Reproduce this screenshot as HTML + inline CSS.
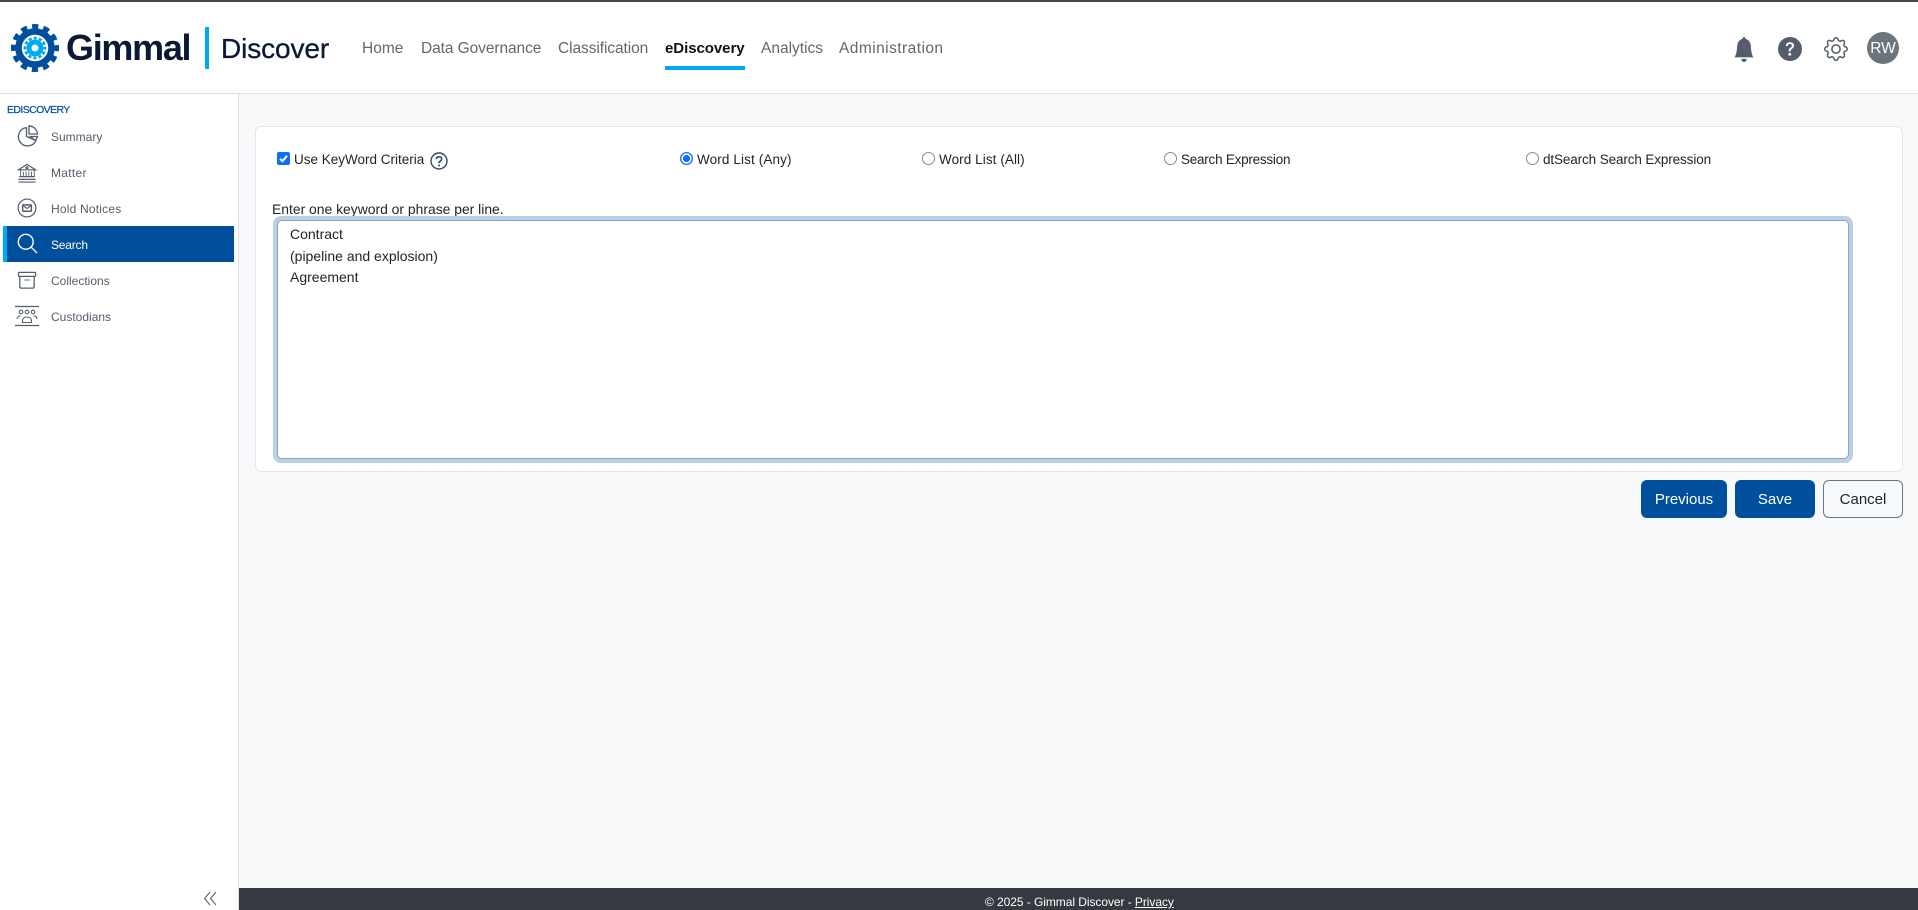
<!DOCTYPE html>
<html lang="en">
<head>
<meta charset="utf-8">
<title>Gimmal Discover</title>
<style>
html,body{margin:0;padding:0}
body{width:1918px;height:910px;overflow:hidden;position:relative;background:#f8f9fa;font-family:"Liberation Sans",sans-serif;color:#212529}
.a{position:absolute;white-space:nowrap}
svg{position:absolute;overflow:visible}
.nav{top:39px;line-height:20px;font-size:15.5px;color:#5f6873}
.side{left:51px;font-size:12px;line-height:16px;color:#555d6b}
.lbl{font-size:13.5px;line-height:18px;color:#212529}
.btn{top:480px;height:38px;line-height:40px;border-radius:6px;text-align:center;font-size:15px;box-sizing:border-box}
.radio{width:11px;height:11px;border:1px solid #8a8a8a;border-radius:50%;background:#fff;top:152px}
</style>
</head>
<body>
<div class="a" style="left:0;top:0;width:1918px;height:2px;background:#4a4453"></div>
<div class="a" style="left:0;top:2px;width:1918px;height:91px;background:#fff"></div>
<div class="a" style="left:0;top:93px;width:1918px;height:1px;background:#dee2e6"></div>

<svg style="left:0;top:0" width="70" height="90" viewBox="0 0 70 90">
  <circle cx="35" cy="48" r="21.5" fill="none" stroke="#004f9c" stroke-width="5" stroke-dasharray="6.2 5.06" stroke-dashoffset="3.1"/>
  <circle cx="35" cy="48" r="16.5" fill="none" stroke="#004f9c" stroke-width="6.5"/>
  <circle cx="35" cy="48" r="10" fill="none" stroke="#00a9f4" stroke-width="2.6" stroke-dasharray="3.2 2.03" stroke-dashoffset="1.6"/>
  <circle cx="35" cy="48" r="6" fill="none" stroke="#00a9f4" stroke-width="5"/>
</svg>
<div class="a" style="left:66px;top:26px;font-size:36px;line-height:44px;font-weight:700;letter-spacing:-1.3px;color:#0b1a33">Gimmal</div>
<div class="a" style="left:205px;top:27px;width:4px;height:42px;background:#00a9f4"></div>
<div class="a" style="left:221px;top:31px;font-size:28px;line-height:36px;letter-spacing:-.1px;-webkit-text-stroke:.3px #0b1a33;color:#0b1a33">Discover</div>

<div class="a nav" style="left:362px">Home</div>
<div class="a nav" style="left:421px;letter-spacing:-.08px">Data Governance</div>
<div class="a nav" style="left:558px;letter-spacing:-.08px">Classification</div>
<div class="a nav" style="left:665px;color:#111;font-weight:700;font-size:15px;letter-spacing:-.05px">eDiscovery</div>
<div class="a" style="left:665px;top:66px;width:80px;height:4px;background:#00a9f4"></div>
<div class="a nav" style="left:761px">Analytics</div>
<div class="a nav" style="left:839px;letter-spacing:.45px">Administration</div>

<svg style="left:1733px;top:37px" width="22" height="25" viewBox="0 0 16 16" preserveAspectRatio="none" fill="#555d6b"><path d="M8 16a2 2 0 0 0 2-2H6a2 2 0 0 0 2 2zm.995-14.901a1 1 0 1 0-1.99 0A5.002 5.002 0 0 0 3 6c0 1.098-.5 6-2 7h14c-1.5-1-2-5.902-2-7 0-2.42-1.72-4.44-4.005-4.901z"/></svg>
<svg style="left:1778px;top:37px" width="24" height="24" viewBox="0 0 16 16" fill="#555d6b"><path d="M16 8A8 8 0 1 1 0 8a8 8 0 0 1 16 0zM5.496 6.033h.825c.138 0 .248-.113.266-.25.09-.656.54-1.134 1.342-1.134.686 0 1.314.343 1.314 1.168 0 .635-.374.927-.965 1.371-.673.489-1.206 1.06-1.168 1.987l.003.217a.25.25 0 0 0 .25.246h.811a.25.25 0 0 0 .25-.25v-.105c0-.718.273-.927 1.01-1.486.609-.463 1.244-.977 1.244-2.056 0-1.511-1.276-2.241-2.673-2.241-1.267 0-2.655.59-2.75 2.286a.237.237 0 0 0 .241.247zm2.325 6.443c.61 0 1.029-.394 1.029-.927 0-.552-.42-.94-1.029-.94-.584 0-1.009.388-1.009.94 0 .533.425.927 1.01.927z"/></svg>
<svg style="left:1824px;top:37px" width="24" height="24" viewBox="0 0 16 16" fill="#555d6b"><path d="M8 4.754a3.246 3.246 0 1 0 0 6.492 3.246 3.246 0 0 0 0-6.492zM5.754 8a2.246 2.246 0 1 1 4.492 0 2.246 2.246 0 0 1-4.492 0z"/><path d="M9.796 1.343c-.527-1.79-3.065-1.79-3.592 0l-.094.319a.873.873 0 0 1-1.255.52l-.292-.16c-1.64-.892-3.433.902-2.54 2.541l.159.292a.873.873 0 0 1-.52 1.255l-.319.094c-1.79.527-1.79 3.065 0 3.592l.319.094a.873.873 0 0 1 .52 1.255l-.16.292c-.892 1.64.901 3.434 2.541 2.54l.292-.159a.873.873 0 0 1 1.255.52l.094.319c.527 1.79 3.065 1.79 3.592 0l.094-.319a.873.873 0 0 1 1.255-.52l.292.16c1.64.893 3.434-.902 2.54-2.541l-.159-.292a.873.873 0 0 1 .52-1.255l.319-.094c1.79-.527 1.79-3.065 0-3.592l-.319-.094a.873.873 0 0 1-.52-1.255l.16-.292c.893-1.64-.902-3.433-2.541-2.54l-.292.159a.873.873 0 0 1-1.255-.52l-.094-.319zm-2.633.283c.246-.835 1.428-.835 1.674 0l.094.319a1.873 1.873 0 0 0 2.693 1.115l.291-.16c.764-.415 1.6.42 1.184 1.185l-.159.292a1.873 1.873 0 0 0 1.116 2.692l.318.094c.835.246.835 1.428 0 1.674l-.319.094a1.873 1.873 0 0 0-1.115 2.693l.16.291c.415.764-.42 1.6-1.185 1.184l-.291-.159a1.873 1.873 0 0 0-2.693 1.116l-.094.318c-.246.835-1.428.835-1.674 0l-.094-.319a1.873 1.873 0 0 0-2.692-1.115l-.292.16c-.764.415-1.6-.42-1.184-1.185l.159-.291A1.873 1.873 0 0 0 1.945 8.93l-.319-.094c-.835-.246-.835-1.428 0-1.674l.319-.094A1.873 1.873 0 0 0 3.06 4.377l-.16-.292c-.415-.764.42-1.6 1.185-1.184l.292.159a1.873 1.873 0 0 0 2.692-1.115l.094-.319z"/></svg>
<div class="a" style="left:1867px;top:32px;width:32px;height:32px;border-radius:50%;background:#6c757d;color:#fff;text-align:center;line-height:34px;font-size:15.5px">RW</div>

<!-- Sidebar -->
<div class="a" style="left:0;top:94px;width:238px;height:816px;background:#fff;border-right:1px solid #dee2e6"></div>
<div class="a" style="left:7px;top:103px;font-size:10.5px;line-height:14px;letter-spacing:-.6px;-webkit-text-stroke:.2px #004f9c;color:#004f9c">EDISCOVERY</div>

<svg style="left:16px;top:125px" width="24" height="22" viewBox="0 0 24 22" fill="none" stroke="#555d6b" stroke-width="1.3">
  <path d="M10.5 2.6A9.2 9.2 0 1 0 20 15.5L10.5 11.5Z"/>
  <path d="M13 .8A9 9 0 0 1 21.5 9H13Z"/>
  <path d="M14.5 11.5H21.5L19.5 15.8Z"/>
</svg>
<div class="a side" style="top:129px">Summary</div>

<svg style="left:17px;top:163px" width="20" height="20" viewBox="0 0 22 22" fill="none" stroke="#555d6b" stroke-width="1.3">
  <path d="M1.5 7.5 11 1.5l9.5 6z"/><circle cx="11" cy="5.2" r="1"/>
  <path d="M4 7.5v7M7 9.5v5M10 9.5v5M13 9.5v5M16 9.5v5M19 7.5v7" stroke-width="1"/>
  <path d="M2.5 15h17M1.500 18h19M1.500 21h19"/>
</svg>
<div class="a side" style="top:165px;letter-spacing:.3px">Matter</div>

<svg style="left:17px;top:198px" width="20" height="20" viewBox="0 0 22 22" fill="none" stroke="#555d6b" stroke-width="1.3">
  <circle cx="11" cy="11" r="9.8"/>
  <rect x="6.2" y="7.6" width="9.6" height="7" rx="1" stroke-width="1.600"/>
  <path d="M6.500 8.200 11 11.600l4.500-3.400" stroke-width="1.300"/>
</svg>
<div class="a side" style="top:201px;letter-spacing:.2px">Hold Notices</div>

<div class="a" style="left:3px;top:226px;width:231px;height:36px;background:#004f9c"></div>
<div class="a" style="left:3px;top:226px;width:4px;height:36px;background:#00a9f4"></div>
<svg style="left:17px;top:233px" width="21" height="21" viewBox="0 0 24 24" fill="none" stroke="#fff" stroke-width="1.600">
  <circle cx="10" cy="10" r="8.500"/><path d="M16.500 16.500l6 6" stroke-linecap="round"/>
</svg>
<div class="a side" style="top:237px;color:#fff;letter-spacing:-.2px">Search</div>

<svg style="left:17px;top:271px" width="20" height="18" viewBox="0 0 22 20" fill="none" stroke="#555d6b" stroke-width="1.400">
  <rect x="1.500" y="1.500" width="19" height="4.500" rx=".8"/>
  <path d="M3 6v11.500a1.500 1.500 0 0 0 1.500 1.500h13a1.500 1.500 0 0 0 1.500-1.500V6"/>
  <path d="M8 10h6" stroke-width="1"/>
</svg>
<div class="a side" style="top:273px">Collections</div>

<svg style="left:14px;top:305px" width="26" height="22" viewBox="0 0 26 22" fill="none" stroke="#555d6b" stroke-width="1.100">
  <path d="M1 1.500h24M1 20.500h24" stroke-width="1.300"/>
  <circle cx="7" cy="7" r="1.800"/><circle cx="13" cy="7" r="1.800"/><circle cx="19" cy="7" r="1.800"/>
  <path d="M3 14c0-2 2-3.200 3.500-3.200M23 14c0-2-2-3.200-3.500-3.200M8.500 17.500v-2c0-2 2-3.500 4.500-3.500s4.500 1.500 4.500 3.500v2z"/>
</svg>
<div class="a side" style="top:309px">Custodians</div>

<svg style="left:203px;top:891px" width="14" height="15" viewBox="0 0 14 15" fill="none" stroke="#555d6b" stroke-width="1">
  <path d="M7 1 1.500 7.500 7 14M13 1 7.500 7.500 13 14"/>
</svg>

<!-- Card -->
<div class="a" style="left:255px;top:126px;width:1648px;height:346px;box-sizing:border-box;background:#fff;border:1px solid #e3e6ea;border-radius:6px"></div>

<svg style="left:277px;top:152px" width="13" height="13" viewBox="0 0 13 13"><rect width="13" height="13" rx="2" fill="#0d6efd"/><path d="M3 6.800 5.400 9.200 10 3.800" fill="none" stroke="#fff" stroke-width="2"/></svg>
<div class="a lbl" style="left:294px;top:151px">Use KeyWord Criteria</div>
<svg style="left:430px;top:152px" width="18" height="18" viewBox="0 0 18 18" fill="none" stroke="#2f4a6d" stroke-width="1.400">
  <circle cx="9" cy="9" r="8"/>
  <path d="M6.300 7.200C6.400 5.600 7.600 4.800 9 4.800c1.500 0 2.700.9 2.700 2.200 0 1.100-.7 1.600-1.500 2.200-.8.500-1.200 1-1.200 2" stroke-width="1.600"/>
  <circle cx="9" cy="13.500" r="1" fill="#2f4a6d" stroke="none"/>
</svg>

<svg style="left:680px;top:152px" width="13" height="13" viewBox="0 0 13 13"><circle cx="6.500" cy="6.500" r="6.500" fill="#0d6efd"/><circle cx="6.500" cy="6.500" r="5.200" fill="#fff"/><circle cx="6.500" cy="6.500" r="3.600" fill="#0d6efd"/></svg>
<div class="a lbl" style="left:697px;top:151px;letter-spacing:.12px">Word List (Any)</div>
<div class="a radio" style="left:922px"></div>
<div class="a lbl" style="left:939px;top:151px;letter-spacing:.08px">Word List (All)</div>
<div class="a radio" style="left:1164px"></div>
<div class="a lbl" style="left:1181px;top:151px;letter-spacing:-.24px">Search Expression</div>
<div class="a radio" style="left:1526px"></div>
<div class="a lbl" style="left:1543px;top:151px;letter-spacing:-.12px">dtSearch Search Expression</div>

<div class="a lbl" style="left:272px;top:200px;font-size:13.9px">Enter one keyword or phrase per line.</div>

<div class="a" style="left:273px;top:216px;width:1580px;height:247px;background:#bccfe3;border-radius:8px"></div>
<div class="a" style="left:277px;top:220px;width:1572px;height:239px;box-sizing:border-box;background:#fff;border:1px solid #86a7cf;border-radius:5px"></div>
<div class="a" style="left:290px;top:224px;font-size:14px;line-height:21.5px;color:#212529;white-space:pre">Contract
(pipeline and explosion)
Agreement</div>

<div class="a btn" style="left:1641px;width:86px;background:#004f9c;color:#fff">Previous</div>
<div class="a btn" style="left:1735px;width:80px;background:#004f9c;color:#fff">Save</div>
<div class="a btn" style="left:1823px;width:80px;border:1px solid #6c757d;color:#212529;line-height:38px">Cancel</div>

<!-- Footer -->
<div class="a" style="left:239px;top:888px;width:1679px;height:22px;background:#343a40"></div>
<div class="a" style="left:985px;top:894px;font-size:12px;line-height:16px;letter-spacing:-.06px;color:#fff">© 2025 - Gimmal Discover - <span style="text-decoration:underline">Privacy</span></div>
</body>
</html>
